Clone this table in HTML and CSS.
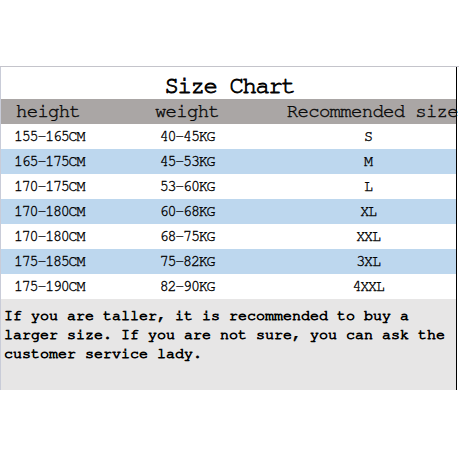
FILE: index.html
```html
<!DOCTYPE html>
<html>
<head>
<meta charset="utf-8">
<link rel="stylesheet" href="styles.css">
</head>
<body>
<div class="sheet">
  <div class="chart">
    <div class="title">Size Chart</div>
    <div class="row head">
      <div class="c1">height</div><div class="c2">weight</div><div class="c3">Recommended size</div>
    </div>
    <div class="row"><div class="c1">155-165CM</div><div class="c2">40-45KG</div><div class="c3">S</div></div>
    <div class="row alt"><div class="c1">165-175CM</div><div class="c2">45-53KG</div><div class="c3">M</div></div>
    <div class="row"><div class="c1">170-175CM</div><div class="c2">53-60KG</div><div class="c3">L</div></div>
    <div class="row alt"><div class="c1">170-180CM</div><div class="c2">60-68KG</div><div class="c3">XL</div></div>
    <div class="row"><div class="c1">170-180CM</div><div class="c2">68-75KG</div><div class="c3">XXL</div></div>
    <div class="row alt"><div class="c1">175-185CM</div><div class="c2">75-82KG</div><div class="c3">3XL</div></div>
    <div class="row"><div class="c1">175-190CM</div><div class="c2">82-90KG</div><div class="c3">4XXL</div></div>
    <div class="note">If you are taller, it is recommended to buy a larger size. If you are not sure, you can ask the customer service lady.</div>
  </div>
</div>
</body>
</html>
```

FILE: styles.css
```css
html, body {
  margin: 0;
  padding: 0;
  background: #ffffff;
}
body {
  width: 459px;
  height: 459px;
  overflow: hidden;
  font-family: "FreeMono", "Liberation Mono", monospace;
  color: #000;
}
.sheet {
  margin-top: 66px;
  border-top: 1px solid #c4c4cb;
  width: 459px;
}
.chart {
  width: 455px;
  border-left: 1px solid #c9ccd8;
  border-right: 1px solid #000;
}
.title {
  height: 32px;
  line-height: 38px;
  text-align: center;
  font-size: 24px;
  letter-spacing: -1.4px;
  padding-left: 2px;
  -webkit-text-stroke: 0.8px #000;
}
.row {
  display: grid;
  grid-template-columns: 93px 186px 176px;
  height: 25px;
  align-items: center;
  font-size: 15px;
  letter-spacing: -1.2px;
  background: #ffffff;
  -webkit-text-stroke: 0.35px #000;
}
.row.alt {
  background: #bdd7ee;
}
.row.head {
  background: #aaa6a5;
  font-size: 19px;
  letter-spacing: -0.7px;
  -webkit-text-stroke: 0.4px #111;
}
.c1 {
  padding-left: 13px;
  white-space: nowrap;
}
.head .c1 {
  padding-left: 15px;
}
.c2, .c3 {
  text-align: center;
  white-space: nowrap;
}
.head .c3 {
  text-align: right;
  margin-right: -2px;
}
.note {
  background: #e7e6e6;
  height: 84px;
  padding: 7px 4px 0 3px;
  font-size: 15px;
  line-height: 19px;
  -webkit-text-stroke: 0.8px #000;
}
```
